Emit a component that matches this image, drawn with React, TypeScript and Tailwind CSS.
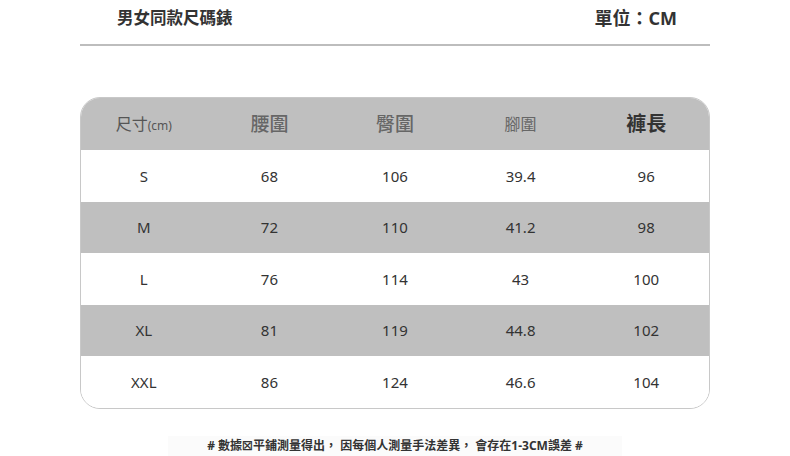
import React from "react";

const rows = [
  ["S", "68", "106", "39.4", "96"],
  ["M", "72", "110", "41.2", "98"],
  ["L", "76", "114", "43", "100"],
  ["XL", "81", "119", "44.8", "102"],
  ["XXL", "86", "124", "46.6", "104"],
];

const font = { fontFamily: '"Noto Sans", "Noto Sans CJK TC", sans-serif' };

export default function App() {
  return (
    <div className="w-[790px] h-[456px] bg-white overflow-hidden text-[#333]" style={font}>
      <div className="h-[36px] flex items-center justify-between pl-[117px] pr-[113px] pt-[1px]">
        <span className="text-[16.5px] font-bold text-[#333]">男女同款尺碼錶</span>
        <span className="text-[18px] font-bold text-[#333]">單位：CM</span>
      </div>
      <div className="mx-[80px] mt-[8px] h-[2px] bg-[#bdbdbd]" />
      <div className="mx-[80px] mt-[51px] h-[312px] rounded-[20px] border border-[#c8c8c8] overflow-hidden flex flex-col">
        <div className="h-[52px] bg-[#bfbfbf] grid grid-cols-5 items-center text-center">
          <div className="text-[16px] text-[#555]">
            尺寸<span className="text-[12px]">(cm)</span>
          </div>
          <div className="text-[19px] text-[#666] font-medium">腰圍</div>
          <div className="text-[19px] text-[#666] font-medium">臀圍</div>
          <div className="text-[16px] text-[#666]">腳圍</div>
          <div className="text-[20px] text-[#333] font-bold">褲長</div>
        </div>
        {rows.map((r, i) => (
          <div
            key={i}
            className={`flex-1 grid grid-cols-5 items-center text-center text-[15px] text-[#333] ${i % 2 === 1 ? "bg-[#bfbfbf]" : "bg-white"}`}
          >
            {r.map((c, j) => (
              <div key={j}>{c}</div>
            ))}
          </div>
        ))}
      </div>
      <div className="mt-[27px] mx-[168px] h-[20px] bg-[#fbfbfb] flex items-center justify-center">
        <span className="text-[12px] font-bold text-[#333]">
          # 數據☒平鋪測量得出， 因每個人測量手法差異， 會存在1-3CM誤差 #
        </span>
      </div>
    </div>
  );
}
